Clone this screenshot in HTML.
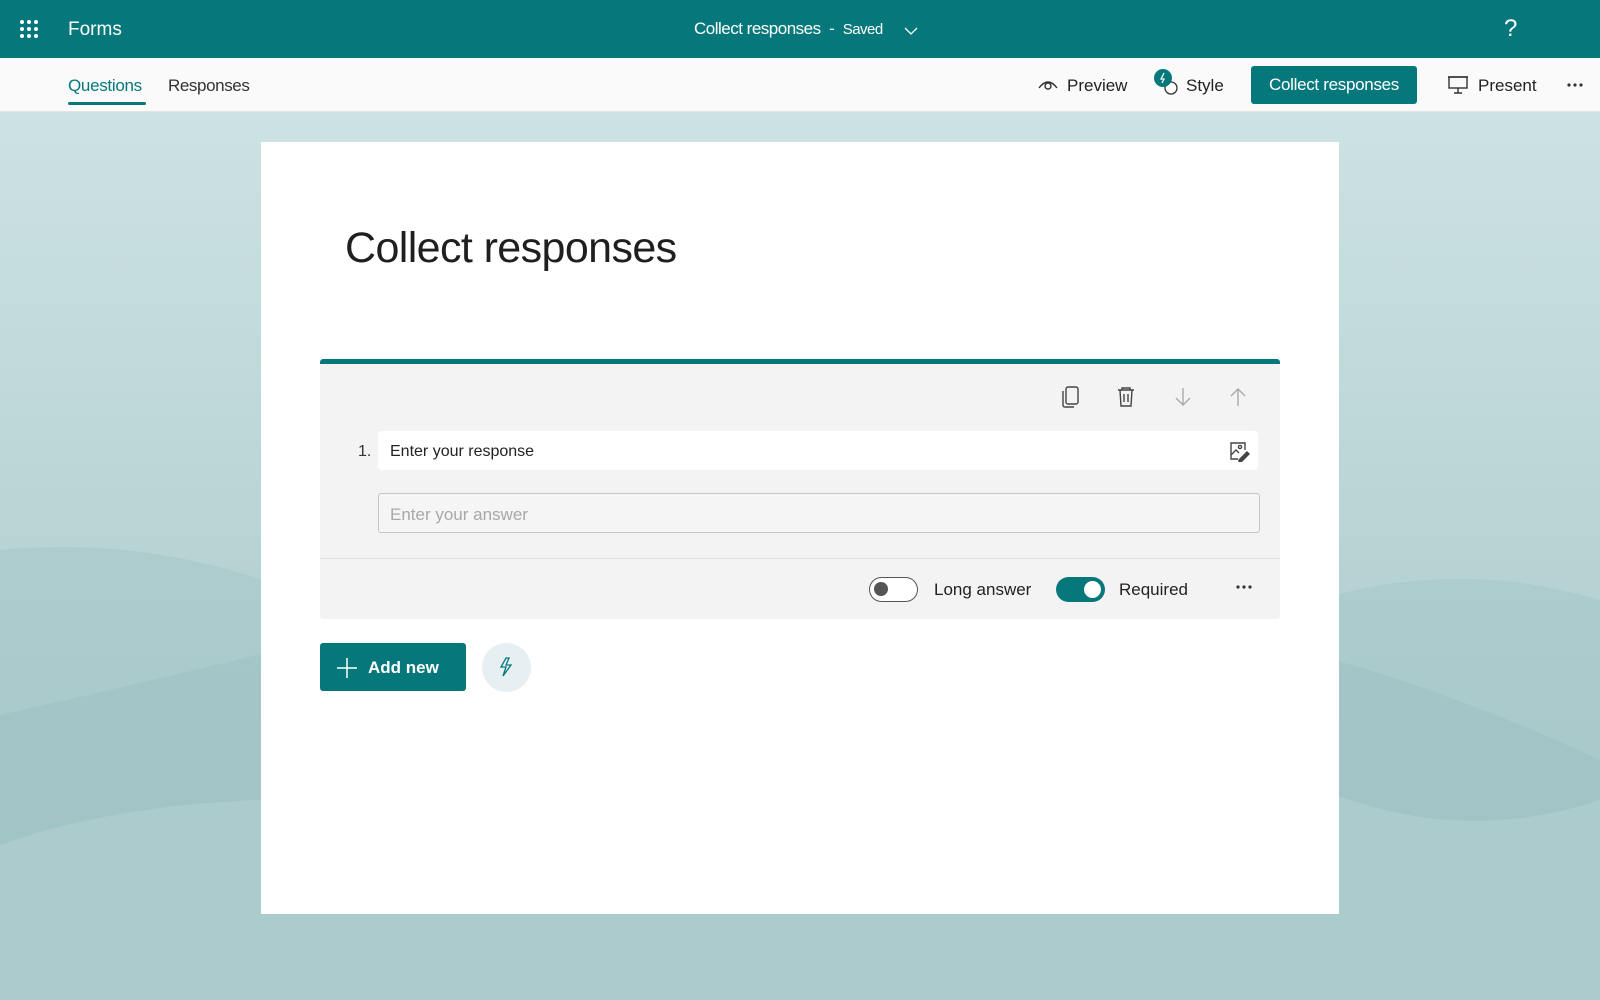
<!DOCTYPE html>
<html><head><meta charset="utf-8"><style>
*{margin:0;padding:0;box-sizing:border-box}
body{width:1600px;height:1000px;overflow:hidden;font-family:"Liberation Sans",sans-serif;position:relative;background:#b3d1d2}
.abs{position:absolute}
.top{left:0;top:0;width:1600px;height:58px;background:#06787c;color:#fff}
.nav{left:0;top:58px;width:1600px;height:54px;background:#fafafa;border-bottom:1px solid #e3e3e3}
.t{white-space:nowrap}
.card{left:261px;top:142px;width:1078px;height:772px;background:#fff}
.q{left:320px;top:359px;width:960px;height:260px;background:#f3f3f3;border-top:5px solid #06787c;border-radius:3px}
.tog{border-radius:13px;height:25px;width:49px}
</style></head><body>
<svg class="abs" style="left:0;top:112px" width="1600" height="888" viewBox="0 112 1600 888">
<defs><linearGradient id="g" x1="0" y1="0" x2="0" y2="1"><stop offset="0" stop-color="#cde2e2"/><stop offset="1" stop-color="#a3c4c6"/></linearGradient></defs>
<rect x="0" y="112" width="1600" height="888" fill="url(#g)"/>
<path d="M0 550 Q200 530 400 640 Q800 700 1200 650 Q1400 540 1600 600 L1600 1000 L0 1000Z" fill="#a3c6c8" opacity=".5"/>
<path d="M0 715 Q200 670 400 620 Q800 560 1300 650 Q1450 690 1600 760 L1600 1000 L0 1000Z" fill="#98bfc1" opacity=".4"/>
<path d="M0 845 Q150 790 400 800 Q800 820 1300 780 Q1450 850 1600 800 L1600 1000 L0 1000Z" fill="#b0cfd0" opacity=".7"/>
</svg>
<div class="abs top">
<svg class="abs" style="left:19px;top:19px" width="20" height="20"><g fill="#fff"><circle cx="3" cy="3" r="2"/><circle cx="10" cy="3" r="2"/><circle cx="17" cy="3" r="2"/><circle cx="3" cy="10" r="2"/><circle cx="10" cy="10" r="2"/><circle cx="17" cy="10" r="2"/><circle cx="3" cy="17" r="2"/><circle cx="10" cy="17" r="2"/><circle cx="17" cy="17" r="2"/></g></svg>
<div class="abs t" style="left:68px;top:19px;font-size:19px">Forms</div>
<div class="abs t" style="left:694px;top:19px;font-size:17px;letter-spacing:-.5px">Collect responses &nbsp;- &nbsp;<span style="font-size:15px">Saved</span></div>
<svg class="abs" style="left:904px;top:26px" width="14" height="10"><path d="M1 2 L7 8 L13 2" stroke="#fff" fill="none" stroke-width="1.3"/></svg>
<div class="abs t" style="left:1504px;top:15px;font-size:24px;font-weight:300">?</div>
</div>
<div class="abs nav">
<div class="abs t" style="left:68px;top:18px;font-size:17px;color:#06787c;letter-spacing:-.3px">Questions</div>
<div class="abs" style="left:68px;top:44px;width:78px;height:3px;background:#06787c;border-radius:2px"></div>
<div class="abs t" style="left:168px;top:18px;font-size:17px;color:#333;letter-spacing:-.4px">Responses</div>
<svg class="abs" style="left:1037px;top:19px" width="22" height="14"><path d="M2 11 Q11 -1 20 11" stroke="#333" fill="none" stroke-width="1.4"/><circle cx="11" cy="9" r="3" stroke="#333" fill="none" stroke-width="1.4"/></svg>
<div class="abs t" style="left:1067px;top:18px;font-size:17px;color:#222">Preview</div>
<svg class="abs" style="left:1152px;top:10px" width="28" height="28"><circle cx="19" cy="20" r="6" fill="#fff" stroke="#333" stroke-width="1.3"/><circle cx="11" cy="10" r="9" fill="#06787c"/><path d="M12 5 L9 11 L12 11 L10 15" stroke="#fff" fill="none" stroke-width="1.2"/></svg>
<div class="abs t" style="left:1186px;top:18px;font-size:17px;color:#222">Style</div>
<div class="abs t" style="left:1251px;top:8px;width:166px;height:38px;background:#06787c;border-radius:3px;color:#fff;font-size:17px;text-align:center;line-height:38px;letter-spacing:-.3px">Collect responses</div>
<svg class="abs" style="left:1447px;top:17px" width="22" height="20"><rect x="2" y="2" width="18" height="11" fill="none" stroke="#333" stroke-width="1.4"/><path d="M1 2 H21 M11 13 V18 M7 18 H15" stroke="#333" stroke-width="1.4"/></svg>
<div class="abs t" style="left:1478px;top:18px;font-size:17px;color:#222">Present</div>
<svg class="abs" style="left:1567px;top:24px" width="18" height="6" fill="#333"><circle cx="2" cy="3" r="1.6"/><circle cx="8" cy="3" r="1.6"/><circle cx="14" cy="3" r="1.6"/></svg>
</div>
<div class="abs card"></div>
<div class="abs t" style="left:345px;top:224px;font-size:43px;color:#1f1f1f;letter-spacing:-.6px">Collect responses</div>
<div class="abs q"></div>
<svg class="abs" style="left:1060px;top:385px" width="200" height="24" fill="none" stroke-width="1.4">
<rect x="6" y="2" width="12" height="17" rx="2" stroke="#444"/><path d="M3 6 V20 Q3 22 5 22 H14" stroke="#444"/>
<path d="M58 5 H74 M62 5 V3 H70 V5 M60 5 L61 21 H71 L72 5 M64 9 V17 M68 9 V17" stroke="#444"/>
<path d="M123 3 V20 M116 13 L123 20 L130 13" stroke="#aaa"/>
<path d="M178 4 V21 M171 11 L178 4 L185 11" stroke="#aaa"/>
</svg>
<div class="abs t" style="left:358px;top:443px;font-size:16px;color:#333">1.</div>
<div class="abs" style="left:378px;top:431px;width:880px;height:39px;background:#fff;border-radius:4px"></div>
<div class="abs t" style="left:390px;top:443px;font-size:16px;color:#222">Enter your response</div>
<svg class="abs" style="left:1228px;top:440px" width="22" height="22" fill="none" stroke="#444" stroke-width="1.4"><path d="M10 19 H3 V3 H17 V10"/><circle cx="12" cy="7" r="1.6"/><path d="M3 15 L8 10 L11 13"/><path d="M11 20 L19 12 L21 14 L13 22 H11Z" fill="#444"/></svg>
<div class="abs" style="left:378px;top:493px;width:882px;height:40px;border:1px solid #c6c6c6;border-radius:3px;background:#f5f5f5"></div>
<div class="abs t" style="left:390px;top:505px;font-size:17px;color:#a8a8a8">Enter your answer</div>
<div class="abs" style="left:320px;top:558px;width:960px;height:1px;background:#ddd"></div>
<div class="abs tog" style="left:869px;top:577px;border:1.5px solid #555;background:#fff"><div class="abs" style="left:4px;top:4px;width:14px;height:14px;border-radius:50%;background:#555"></div></div>
<div class="abs t" style="left:934px;top:580px;font-size:17px;color:#222">Long answer</div>
<div class="abs tog" style="left:1056px;top:577px;background:#06787c"><div class="abs" style="left:28px;top:4px;width:17px;height:17px;border-radius:50%;background:#fff"></div></div>
<div class="abs t" style="left:1119px;top:580px;font-size:17px;color:#222">Required</div>
<svg class="abs" style="left:1236px;top:584px" width="18" height="6" fill="#333"><circle cx="2" cy="3" r="1.6"/><circle cx="8" cy="3" r="1.6"/><circle cx="14" cy="3" r="1.6"/></svg>
<div class="abs" style="left:320px;top:643px;width:146px;height:48px;background:#06787c;border-radius:3px"></div>
<svg class="abs" style="left:337px;top:658px" width="20" height="20"><path d="M10 0 V20 M0 10 H20" stroke="#fff" stroke-width="1.5"/></svg>
<div class="abs t" style="left:368px;top:658px;font-size:17px;color:#fff;font-weight:bold">Add new</div>
<div class="abs" style="left:482px;top:643px;width:49px;height:49px;border-radius:50%;background:#e6f0f2"></div>
<svg class="abs" style="left:497px;top:657px" width="18" height="20" fill="none" stroke="#06787c" stroke-width="1.3"><path d="M9 1 L4 10 H9 L6 19 L14 8 H9 L12 1Z"/></svg>
</body></html>
